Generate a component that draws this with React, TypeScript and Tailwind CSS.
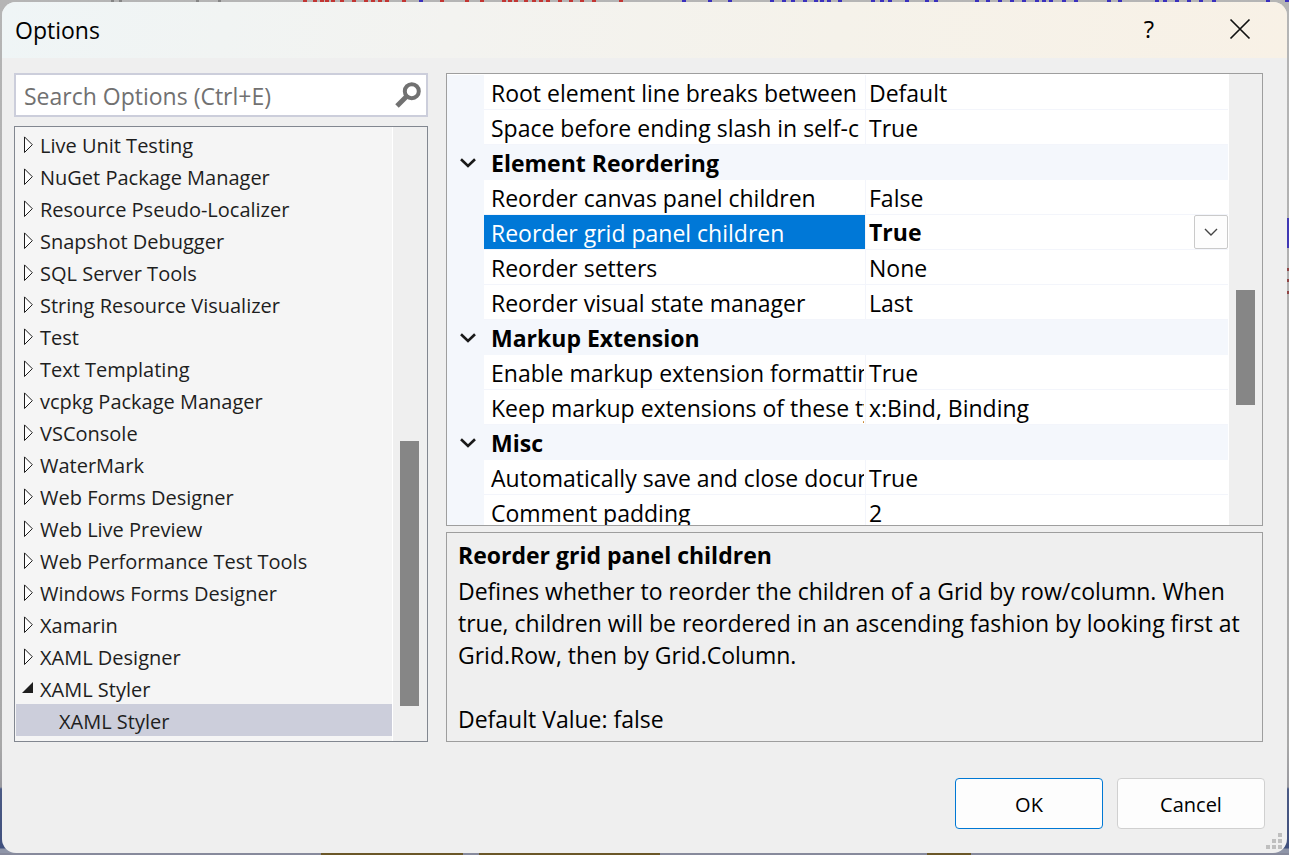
import { useState } from "react";

type Property = { name: string; value: string };
type Category = { title: string | null; items: Property[] };

const treeNodes = [
  "Live Unit Testing",
  "NuGet Package Manager",
  "Resource Pseudo-Localizer",
  "Snapshot Debugger",
  "SQL Server Tools",
  "String Resource Visualizer",
  "Test",
  "Text Templating",
  "vcpkg Package Manager",
  "VSConsole",
  "WaterMark",
  "Web Forms Designer",
  "Web Live Preview",
  "Web Performance Test Tools",
  "Windows Forms Designer",
  "Xamarin",
  "XAML Designer",
];

const categories: Category[] = [
  {
    title: null,
    items: [
      { name: "Root element line breaks between", value: "Default" },
      { name: "Space before ending slash in self-c", value: "True" },
    ],
  },
  {
    title: "Element Reordering",
    items: [
      { name: "Reorder canvas panel children", value: "False" },
      { name: "Reorder grid panel children", value: "True" },
      { name: "Reorder setters", value: "None" },
      { name: "Reorder visual state manager", value: "Last" },
    ],
  },
  {
    title: "Markup Extension",
    items: [
      { name: "Enable markup extension formattin", value: "True" },
      { name: "Keep markup extensions of these ty", value: "x:Bind, Binding" },
    ],
  },
  {
    title: "Misc",
    items: [
      { name: "Automatically save and close docum", value: "True" },
      { name: "Comment padding", value: "2" },
    ],
  },
];

const selectedProperty = "Reorder grid panel children";

/* Tips of the editor's code glyphs showing above the dialog. */
const redMarks = [303, 313, 320, 325, 331, 340, 352, 364, 371, 378, 385, 402, 440, 465, 480, 502, 508, 514, 524, 532, 539, 546, 558, 569, 580, 592, 619];
const blueMarks = [419, 682, 708, 728, 770, 782, 791, 803, 814, 820, 827, 838, 871, 880, 888, 905, 925, 934, 975, 986, 998, 1010, 1022, 1035, 1042, 1049, 1062, 1074, 1107, 1118, 1155, 1163, 1175, 1187, 1199, 1212, 1266, 1285];

function EditorStrip() {
  return (
    <svg className="block h-[2px] w-full" aria-hidden="true">
      {[111, 119, 196, 218].map((x) => (
        <rect key={x} x={x} width="3" height="2" fill="#858585" />
      ))}
      {redMarks.map((x) => (
        <rect key={x} x={x} width="4" height="2" fill="#c23532" />
      ))}
      {blueMarks.map((x) => (
        <rect key={x} x={x} width="4" height="2" fill="#3a30bd" />
      ))}
    </svg>
  );
}

function CollapsedArrow() {
  return (
    <svg width="12" height="18" viewBox="0 0 12 18" className="shrink-0" aria-hidden="true">
      <path d="M2.5 1.9v15.6L10.3 9.7z" fill="#fff" stroke="#1e1e1e" />
    </svg>
  );
}

function ExpandedArrow() {
  return (
    <svg width="12" height="18" viewBox="0 0 12 18" className="shrink-0" aria-hidden="true">
      <path d="M11 3v11H0z" fill="#1e1e1e" />
    </svg>
  );
}

function PropertyRow({ item }: { item: Property }) {
  const selected = item.name === selectedProperty;
  return (
    <tr className="h-[35px]">
      <td className="bg-[#f4f7fc] p-0" />
      <th
        scope="row"
        className={
          selected
            ? "border-r border-b border-[#f3f5fb] bg-[#0078d7] py-0 pr-px pl-[7px] text-left font-normal text-white"
            : "border-r border-b border-[#f3f5fb] py-0 pr-px pl-[7px] text-left font-normal"
        }
      >
        <span className="block h-[34px] overflow-hidden pt-[2px] leading-8 whitespace-nowrap">{item.name}</span>
      </th>
      <td className="border-b border-[#f3f5fb] p-0">
        {selected ? (
          <div className="grid items-center">
            <select
              aria-label={item.name}
              defaultValue={item.value}
              className="col-start-1 row-start-1 h-[34px] w-full appearance-none bg-transparent px-[3px] font-bold outline-none"
            >
              <option>True</option>
              <option>False</option>
            </select>
            <span className="pointer-events-none col-start-1 row-start-1 flex h-[34px] w-[34px] items-center justify-center justify-self-end rounded-xs border border-[#cacaca] bg-[#fdfdfd]">
              <svg width="14" height="8" viewBox="0 0 14 8" fill="none" stroke="#444" strokeWidth="1.4" aria-hidden="true">
                <path d="M1 1l6 6 6-6" />
              </svg>
            </span>
          </div>
        ) : (
          <span className="block h-[34px] truncate px-[3px] pt-[2px] leading-8">{item.value}</span>
        )}
      </td>
    </tr>
  );
}

export default function App() {
  const [query, setQuery] = useState("");

  return (
    <div className="flex min-h-screen flex-col bg-[linear-gradient(to_bottom,transparent_218px,#4038b4_218px,#4038b4_248px,transparent_248px,transparent_268px,#8f4444_268px,#8f4444_271px,transparent_271px,transparent_279px,#8f4444_279px,#8f4444_282px,transparent_282px,transparent_291px,#8f4444_291px,#8f4444_294px,transparent_294px),linear-gradient(to_bottom,#b5b5b5_0,#a8a8a8_745px,#9a9aa0_787px,#4c5b85_789px,#3f4f7d_848px,#8f95a8_849px)] bg-[size:2px_100%,100%_100%] bg-[position:right_top,left_top] bg-no-repeat font-['Open_Sans','Segoe_UI',sans-serif] text-black">
      <EditorStrip />
      <main
        role="dialog"
        aria-labelledby="dialog-title"
        className="mx-[2px] flex flex-1 flex-col overflow-hidden rounded-[14px] bg-[#efefef]"
      >
        <header className="flex h-14 items-center bg-[linear-gradient(100deg,#eff5f6_0%,#f3f3f0_35%,#f5f2ea_65%,#f8f1e6_100%)] pl-[13px]">
          <h1 id="dialog-title" className="flex-1 text-[23px]">
            Options
          </h1>
          <button type="button" aria-label="Help" className="flex h-14 w-[88px] items-center justify-center pb-[2px] text-2xl">
            ?
          </button>
          <button type="button" aria-label="Close" className="flex h-14 w-[94px] items-center justify-center pb-[2px]">
            <svg width="22" height="22" viewBox="0 0 22 22" stroke="#111" strokeWidth="1.7" aria-hidden="true">
              <path d="M1.5 1.5l19 19M20.5 1.5l-19 19" />
            </svg>
          </button>
        </header>

        <div className="flex gap-[18px] pt-[15px] pr-6 pl-3">
          <section className="flex w-[414px] shrink-0 flex-col gap-[9px]">
            <label className="flex h-11 items-center border-2 border-[#cccedb] bg-white pr-[5px] pl-2">
              <input
                type="text"
                aria-label="Search Options"
                value={query}
                onChange={(e) => setQuery(e.target.value)}
                placeholder="Search Options (Ctrl+E)"
                className="min-w-0 flex-1 bg-transparent pt-[2px] text-[23px] outline-none placeholder:text-[#717171]"
              />
              <svg width="26" height="26" viewBox="0 0 26 26" fill="none" stroke="#717171" aria-hidden="true">
                <circle cx="16.8" cy="9.2" r="7" strokeWidth="4" />
                <path d="M11.5 14.5L2 24" strokeWidth="5" />
              </svg>
            </label>

            <nav aria-label="Option pages" className="flex h-[616px] border border-[#828790] bg-[#f5f5f5]">
              <ul className="min-w-0 flex-1 border-r border-white py-px pl-px text-xl text-[#1e1e1e]">
                {treeNodes.map((node) => (
                  <li key={node}>
                    <button type="button" aria-expanded="false" className="flex h-8 w-full items-center gap-[6px] pl-[6px] text-left whitespace-nowrap">
                      <CollapsedArrow />
                      <span className="pt-[3px]">{node}</span>
                    </button>
                  </li>
                ))}
                <li>
                  <button type="button" aria-expanded="true" className="flex h-8 w-full items-center gap-[6px] pl-[6px] text-left">
                    <ExpandedArrow />
                    <span className="pt-[3px]">XAML Styler</span>
                  </button>
                  <ul>
                    <li>
                      <button type="button" aria-current="page" className="flex h-8 w-full items-center bg-[#cccedb] pl-[43px] text-left">
                        <span className="pt-[3px]">XAML Styler</span>
                      </button>
                    </li>
                  </ul>
                </li>
              </ul>
              <div className="w-[34px] bg-[#efefef] px-[7px] pt-[314px]" aria-hidden="true">
                <div className="h-[265px] w-[19px] bg-[#868686]" />
              </div>
            </nav>
          </section>

          <section className="flex min-w-0 flex-1 flex-col gap-[6px] text-[23px]">
            <div className="flex min-h-0 flex-1 basis-0 overflow-hidden border border-[#9e9e9e] bg-white">
              <div className="min-w-0 flex-1">
                <table className="mt-px w-full table-fixed border-separate border-spacing-0 leading-[34px]">
                  <colgroup>
                    <col className="w-[37px]" />
                    <col className="w-[382px]" />
                    <col />
                  </colgroup>
                  {categories.map((category) => (
                    <tbody key={category.title ?? "formatting"}>
                      {category.title && (
                        <tr className="h-[35px] bg-[#f4f7fc]">
                          <td className="p-0">
                            <button type="button" aria-label={"Collapse " + category.title} className="flex h-[34px] w-full items-center justify-center pl-[5px]">
                              <svg width="16" height="10" viewBox="0 0 16 10" fill="none" stroke="#1a1a1a" strokeWidth="2.6" aria-hidden="true">
                                <path d="M1 1.2l7 6.8 7-6.8" />
                              </svg>
                            </button>
                          </td>
                          <th colSpan={2} scope="colgroup" className="py-0 pr-0 pl-[7px] text-left font-bold">
                            {category.title}
                          </th>
                        </tr>
                      )}
                      {category.items.map((item) => (
                        <PropertyRow key={item.name} item={item} />
                      ))}
                    </tbody>
                  ))}
                </table>
              </div>
              <div className="w-[34px] border-l border-white bg-[#efefef] px-[7px] pt-[216px]" aria-hidden="true">
                <div className="h-[115px] w-[19px] bg-[#868686]" />
              </div>
            </div>

            <div className="h-[210px] border border-[#9e9e9e] px-[11px] pt-[6px] leading-8">
              <h2 className="pb-1 font-bold">Reorder grid panel children</h2>
              <p>
                Defines whether to reorder the children of a Grid by row/column. When true, children will be reordered in an
                ascending fashion by looking first at Grid.Row, then by Grid.Column.
              </p>
              <p className="pt-8">Default Value: false</p>
            </div>
          </section>
        </div>

        <footer className="mt-auto flex items-end justify-end pt-9 pr-[5px] pb-1 text-xl">
          <button type="button" className="mb-5 h-[51px] w-[148px] rounded-sm border border-[#0078d4] bg-[#fdfdfd] pt-[2px]">
            OK
          </button>
          <button type="button" className="mb-5 ml-[14px] h-[51px] w-[148px] rounded-sm border border-[#d0d0d0] bg-[#fdfdfd] pt-[2px]">
            Cancel
          </button>
          <svg width="17" height="16" viewBox="0 0 17 16" fill="#bfbfbf" aria-hidden="true">
            <path d="M13 0h4v4h-4zM7 6h4v4H7zM13 6h4v4h-4zM1 12h4v4H1zM7 12h4v4H7zM13 12h4v4h-4z" />
          </svg>
        </footer>
      </main>
      <div className="flex h-[2px] bg-[#878a9c]" aria-hidden="true">
        <div className="ml-[321px] w-[142px] bg-[#6b5728]" />
        <div className="ml-4 w-[181px] bg-[#6b5728]" />
        <div className="ml-[267px] w-11 bg-[#6b5728]" />
      </div>
    </div>
  );
}
